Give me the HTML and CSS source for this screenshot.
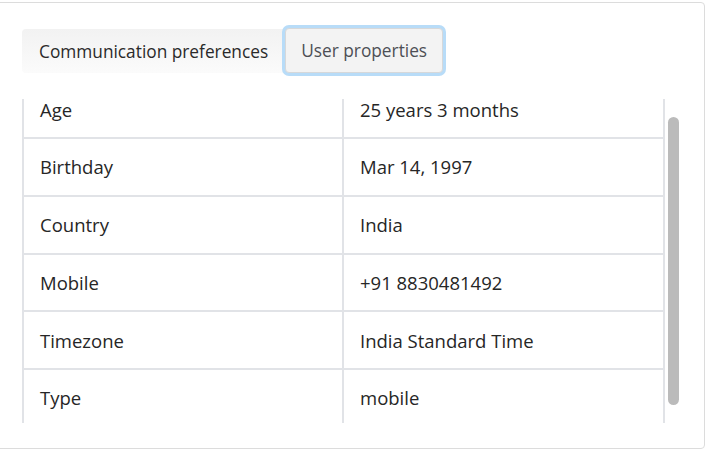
FILE: index.html
```html
<!DOCTYPE html>
<html>
<head>
<meta charset="utf-8">
<link rel="stylesheet" href="styles.css">
</head>
<body>
<div class="card">
  <div class="tabs">
    <div class="tab">Communication preferences</div>
    <div class="tab active">User properties</div>
  </div>
  <div class="scroller">
    <div class="viewport">
      <div class="table">
        <div class="row"><div class="cell key">Age</div><div class="cell val">25 years 3 months</div></div>
        <div class="row"><div class="cell key">Birthday</div><div class="cell val">Mar 14, 1997</div></div>
        <div class="row"><div class="cell key">Country</div><div class="cell val">India</div></div>
        <div class="row"><div class="cell key">Mobile</div><div class="cell val">+91 8830481492</div></div>
        <div class="row"><div class="cell key">Timezone</div><div class="cell val">India Standard Time</div></div>
        <div class="row"><div class="cell key">Type</div><div class="cell val">mobile</div></div>
      </div>
    </div>
    <div class="track"><div class="thumb"></div></div>
  </div>
</div>
</body>
</html>
```
FILE: styles.css
```css
html, body {
  margin: 0;
  padding: 0;
  background: #fff;
}
body {
  font-family: "Open Sans", "Liberation Sans", sans-serif;
  font-size: 18.5px;
  color: #262626;
}
.card {
  margin: 2px 2px 0 -11px;
  height: 447px;
  box-sizing: border-box;
  border: 1px solid #dcdcdc;
  border-radius: 4px;
  padding: 26px 0 0 32px;
}
.tabs {
  display: inline-flex;
  height: 44px;
  border-radius: 4px;
  background: linear-gradient(#f2f2f2, #fbfbfb);
  font-size: 17.3px;
}
.tab {
  display: flex;
  align-items: center;
  padding: 0 15px 0 17px;
  color: #2a2a2a;
  white-space: nowrap;
}
.tab.active {
  margin-left: 2px;
  padding: 0 15px 0 15px;
  background: #f3f3f3;
  border: 1px solid #d6d8da;
  border-radius: 4px;
  box-shadow: 0 0 0 3px #b8dcf8;
  color: #4d4f55;
  box-sizing: border-box;
  height: 45px;
  margin-top: -1px;
}
.scroller {
  display: flex;
  margin-top: 26px;
  height: 324px;
}
.viewport {
  width: 643px;
  height: 324px;
  overflow: hidden;
}
.table {
  margin-top: -17.75px;
  border-left: 2px solid #e1e3e7;
  border-right: 2px solid #e1e3e7;
}
.row {
  display: flex;
  border-bottom: 2px solid #e1e3e7;
}
.cell {
  box-sizing: border-box;
  height: 55.75px;
  display: flex;
  align-items: center;
  padding-left: 16px;
}
.key {
  width: 320px;
  border-right: 2px solid #e1e3e7;
}
.val {
  flex: 1;
}
.track {
  width: 11px;
  margin-left: 3px;
  padding-top: 18px;
}
.thumb {
  height: 288px;
  border-radius: 6px;
  background: #bbbbbb;
}
```
